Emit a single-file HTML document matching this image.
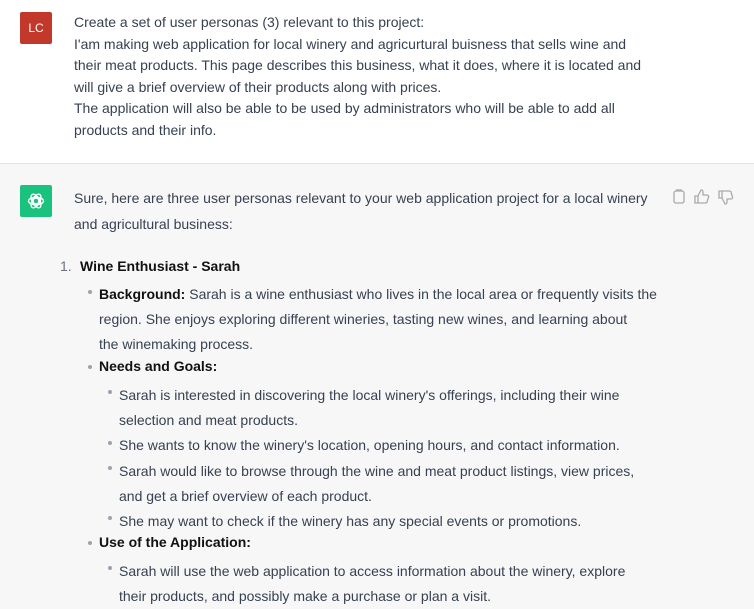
<!DOCTYPE html>
<html><head><style>
body{margin:0;width:754px;height:609px;overflow:hidden;font-family:"Liberation Sans",sans-serif;font-size:14px;color:#374151;background:#f7f7f8}
.u{position:absolute;left:0;top:0;width:754px;height:163px;background:#fff;border-bottom:1px solid #e3e3e6}
.av{position:absolute;left:20px;width:32px;height:32px;border-radius:2px;color:#fff;font-size:12px;display:flex;align-items:center;justify-content:center}
.t{position:absolute;left:74px;white-space:nowrap}
.l{position:absolute;white-space:nowrap}
.d{position:absolute;width:4px;height:4px;border-radius:50%;background:#9ca3af}
b{color:#111;font-weight:bold}
</style></head><body>
<div class="u"></div>
<div class="av" style="top:12px;background:#c2392b">LC</div>
<div class="t" style="top:12px;line-height:21.6px">Create a set of user personas (3) relevant to this project:<br>I'am making web application for local winery and agricurtural buisness that sells wine and<br>their meat products. This page describes this business, what it does, where it is located and<br>will give a brief overview of their products along with prices.<br>The application will also be able to be used by administrators who will be able to add all<br>products and their info.</div>
<div class="av" style="top:185px;background:#19c37d"><svg width="20" height="20" viewBox="0 0 24 24" fill="none" stroke="#fff" stroke-width="1.6"><circle cx="12" cy="12" r="3.5"/><ellipse cx="12" cy="12" rx="9" ry="4.5"/><ellipse cx="12" cy="12" rx="9" ry="4.5" transform="rotate(60 12 12)"/><ellipse cx="12" cy="12" rx="9" ry="4.5" transform="rotate(120 12 12)"/></svg></div>
<div class="t" style="top:185px;line-height:26px">Sure, here are three user personas relevant to your web application project for a local winery<br>and agricultural business:</div>
<svg style="position:absolute;left:672px;top:189px" width="72" height="16" fill="none" stroke="#aaa" stroke-width="1.3"><rect x="2" y="2" width="10" height="12" rx="2"/><path d="M4.5 2V1h5v1"/><path d="M26 7v7h-3V7zM26 7l3-6c2 0 2 1 2 2v3h4c1 0 2 1 1.5 2l-1.5 5c0 1-1 1-2 1h-7"/><path d="M50 9V2h-3v7zM50 9l3 6c2 0 2-1 2-2v-3h4c1 0 2-1 1.5-2l-1.5-5c0-1-1-1-2-1h-7"/></svg>
<div class="l" style="left:60px;top:258px;color:#6b7280">1.</div>
<div class="l" style="left:80px;top:258px"><b>Wine Enthusiast - Sarah</b></div>
<div class="d" style="left:88px;top:290px"></div>
<div class="l" style="left:99px;top:282px;line-height:25.2px"><b>Background:</b> Sarah is a wine enthusiast who lives in the local area or frequently visits the<br>region. She enjoys exploring different wineries, tasting new wines, and learning about<br>the winemaking process.</div>
<div class="d" style="left:88px;top:365px"></div>
<div class="l" style="left:99px;top:358px"><b>Needs and Goals:</b></div>
<div class="d" style="left:108px;top:390px"></div>
<div class="d" style="left:108px;top:441px"></div>
<div class="d" style="left:108px;top:466px"></div>
<div class="d" style="left:108px;top:516px"></div>
<div class="l" style="left:119px;top:383px;line-height:25.2px">Sarah is interested in discovering the local winery's offerings, including their wine<br>selection and meat products.<br>She wants to know the winery's location, opening hours, and contact information.<br>Sarah would like to browse through the wine and meat product listings, view prices,<br>and get a brief overview of each product.<br>She may want to check if the winery has any special events or promotions.</div>
<div class="d" style="left:88px;top:541px"></div>
<div class="l" style="left:99px;top:534px"><b>Use of the Application:</b></div>
<div class="d" style="left:108px;top:566px"></div>
<div class="l" style="left:119px;top:559px;line-height:25.2px">Sarah will use the web application to access information about the winery, explore<br>their products, and possibly make a purchase or plan a visit.</div>
</body></html>
